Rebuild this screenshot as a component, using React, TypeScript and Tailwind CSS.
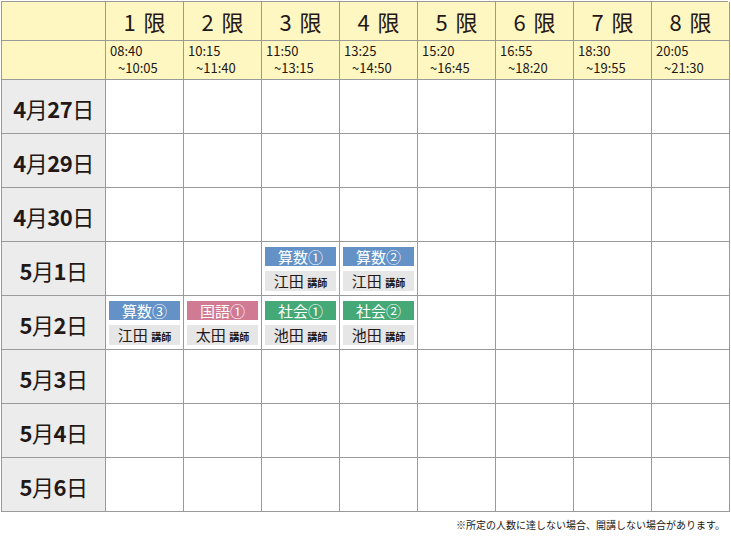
const periods = [
  ["1", "08:40", "~10:05"],
  ["2", "10:15", "~11:40"],
  ["3", "11:50", "~13:15"],
  ["4", "13:25", "~14:50"],
  ["5", "15:20", "~16:45"],
  ["6", "16:55", "~18:20"],
  ["7", "18:30", "~19:55"],
  ["8", "20:05", "~21:30"],
];

const days = [
  ["4", "27"], ["4", "29"], ["4", "30"], ["5", "1"], ["5", "2"], ["5", "3"], ["5", "4"], ["5", "6"],
];

type Lesson = { title: string; color: string; teacher: string };

const lessons: Record<string, Lesson> = {
  "3-2": { title: "算数①", color: "bg-[#6491c6]", teacher: "江田" },
  "3-3": { title: "算数②", color: "bg-[#6491c6]", teacher: "江田" },
  "4-0": { title: "算数③", color: "bg-[#6491c6]", teacher: "江田" },
  "4-1": { title: "国語①", color: "bg-[#d17a93]", teacher: "太田" },
  "4-2": { title: "社会①", color: "bg-[#45a877]", teacher: "池田" },
  "4-3": { title: "社会②", color: "bg-[#45a877]", teacher: "池田" },
};

const font = { fontFamily: '"Noto Sans CJK JP", "Noto Sans", sans-serif' };

export default function App() {
  return (
    <div className="w-[731px] h-[543px] bg-white text-[#231815]" style={font}>
      <div className="pt-px pl-px">
        <div className="grid grid-cols-[104px_repeat(8,78px)] grid-rows-[39px_39px_repeat(8,54px)] border-l border-t border-[#9a9a9a] w-[727px]">
          <div className="bg-[#fff7c2] border-r border-b border-[#9a9a9a]" />
          {periods.map(([n]) => (
            <div key={n} className="bg-[#fff7c2] border-r border-b border-[#9a9a9a] flex items-center justify-center gap-2 text-[22px] leading-none">
              <span>{n}</span><span>限</span>
            </div>
          ))}
          <div className="bg-[#fff7c2] border-r border-b border-[#9a9a9a]" />
          {periods.map(([n, a, b]) => (
            <div key={n} className="bg-[#fff7c2] border-r border-b border-[#9a9a9a] text-[13px] leading-[17px] pl-1 pt-px">
              <div>{a}</div>
              <div className="pl-2">{b}</div>
            </div>
          ))}
          {days.map(([m, d], r) => (
            <>
              <div key={"d" + r} className="bg-[#ececec] border-r border-b border-[#9a9a9a] flex items-center justify-center font-bold text-[22px] tracking-[-0.5px] pt-[3px]">
                {m}<span className="font-normal">月</span>{d}<span className="font-normal">日</span>
              </div>
              {periods.map((_, c) => {
                const l = lessons[`${r}-${c}`];
                return (
                  <div key={r + "-" + c} className="border-r border-b border-[#9a9a9a] flex flex-col items-center pt-[5px] gap-[5px]">
                    {l && (
                      <>
                        <div className={`${l.color} w-[71px] h-[19px] text-white text-[15px] leading-[19px] text-center`}>{l.title}</div>
                        <div className="bg-[#e6e6e6] w-[71px] h-[20px] text-[15px] leading-[20px] text-center">
                          {l.teacher} <span className="text-[10px] font-bold">講師</span>
                        </div>
                      </>
                    )}
                  </div>
                );
              })}
            </>
          ))}
        </div>
      </div>
      <div className="text-right text-[10px] pr-[6px] pt-[5px]">※所定の人数に達しない場合、開講しない場合があります。</div>
    </div>
  );
}
